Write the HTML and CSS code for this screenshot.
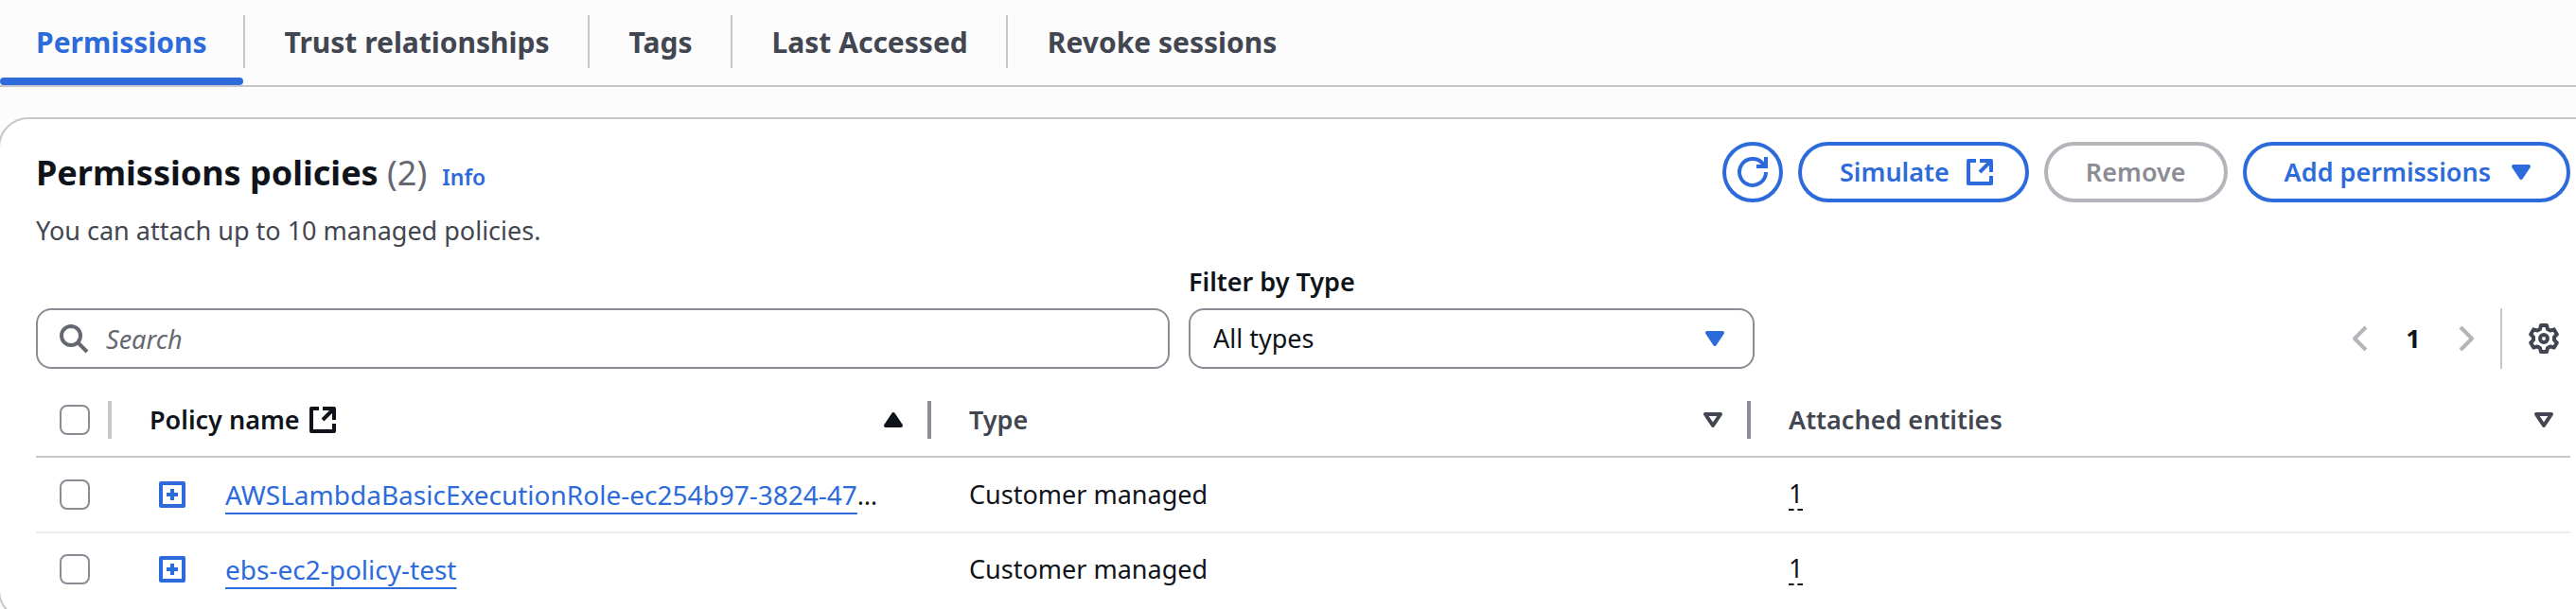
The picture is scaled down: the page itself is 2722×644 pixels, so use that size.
FILE: index.html
```html
<!DOCTYPE html>
<html lang="en">
<head>
<meta charset="utf-8">
<title>Permissions</title>
<link rel="stylesheet" href="styles.css">
</head>
<body>
<svg class="sprite" aria-hidden="true">
  <symbol id="external" viewBox="0 0 16 16"><path d="M6 2H2v12h12v-4M8 2h6v6M14 2 8 8" fill="none" stroke="currentColor" stroke-width="2" stroke-linejoin="round"/></symbol>
  <symbol id="down" viewBox="0 0 16 16"><path d="M4 5h8l-4 6z" fill="currentColor" stroke="currentColor" stroke-width="2" stroke-linejoin="round"/></symbol>
  <symbol id="up" viewBox="0 0 16 16"><path d="M4 11h8L8 5z" fill="currentColor" stroke="currentColor" stroke-width="2" stroke-linejoin="round"/></symbol>
  <symbol id="sort" viewBox="0 0 16 16"><path d="M4 5h8l-4 6z" fill="none" stroke="currentColor" stroke-width="2" stroke-linejoin="round"/></symbol>
  <symbol id="expand" viewBox="0 0 16 16"><path d="M2 2h12v12H2zM8 5v6M5 8h6" fill="none" stroke="currentColor" stroke-width="2" stroke-linejoin="round"/></symbol>
</svg>

<nav class="tabs" aria-label="Role sections">
  <button class="tab tab-active" type="button"><span>Permissions</span></button>
  <button class="tab" type="button"><span>Trust relationships</span></button>
  <button class="tab" type="button"><span>Tags</span></button>
  <button class="tab" type="button"><span>Last Accessed</span></button>
  <button class="tab" type="button"><span>Revoke sessions</span></button>
</nav>

<main class="panel">
  <header class="panel-header">
    <div class="heading">
      <div class="title-row">
        <h2 class="title">Permissions policies <span class="counter">(2)</span></h2>
        <a class="info" href="#info">Info</a>
      </div>
      <p class="description">You can attach up to 10 managed policies.</p>
    </div>
    <div class="actions">
      <button class="btn btn-icon" type="button" aria-label="Refresh">
        <svg class="icon" viewBox="0 0 16 16"><path d="M15 8a7 7 0 1 1-1.600-4.500L15 5M15 0v5h-5" fill="none" stroke="currentColor" stroke-width="2"/></svg>
      </button>
      <button class="btn btn-trailing" type="button">Simulate <svg class="icon"><use href="#external"/></svg></button>
      <button class="btn" type="button" disabled>Remove</button>
      <button class="btn btn-trailing" type="button">Add permissions <svg class="icon"><use href="#down"/></svg></button>
    </div>
  </header>

  <div class="toolbar">
    <div class="field search">
      <svg class="icon" viewBox="0 0 16 16"><circle cx="6.5" cy="6.5" r="5" fill="none" stroke="currentColor" stroke-width="2"/><path d="m10 10 5 5" stroke="currentColor" stroke-width="2"/></svg>
      <input class="search-input" type="text" placeholder="Search" aria-label="Search">
    </div>
    <div class="filter">
      <label class="filter-label" for="type">Filter by Type</label>
      <div class="field">
        <select class="select" id="type"><option>All types</option></select>
        <svg class="icon select-arrow"><use href="#down"/></svg>
      </div>
    </div>
    <div class="pager">
      <button class="pager-btn" type="button" aria-label="Previous page" disabled><svg class="icon" viewBox="0 0 16 16"><path d="M11 2 5 8l6 6" fill="none" stroke="currentColor" stroke-width="2" stroke-linejoin="round"/></svg></button>
      <button class="page" type="button">1</button>
      <button class="pager-btn" type="button" aria-label="Next page" disabled><svg class="icon" viewBox="0 0 16 16"><path d="m5 2 6 6-6 6" fill="none" stroke="currentColor" stroke-width="2" stroke-linejoin="round"/></svg></button>
      <button class="settings" type="button" aria-label="Preferences">
        <svg class="icon" viewBox="0 0 16 16"><path d="M6.500 1h3l.5 2 1.400.8 2-.6 1.500 2.600L13.500 7.200v1.600l1.400 1.400-1.500 2.600-2-.6L10 13l-.5 2h-3L6 13l-1.400-.8-2 .6-1.500-2.600 1.400-1.400V7.200L1.100 5.800l1.500-2.600 2 .6L6 3z" fill="none" stroke="currentColor" stroke-width="2" stroke-linejoin="round"/><circle cx="8" cy="8" r="2" fill="none" stroke="currentColor" stroke-width="2"/></svg>
      </button>
    </div>
  </div>

  <table class="table">
    <colgroup><col class="col-select"><col><col><col></colgroup>
    <thead>
      <tr>
        <th><div class="head head-select"><input class="check" type="checkbox" aria-label="Select all"></div></th>
        <th><div class="head head-name"><span class="head-text head-sorted">Policy name <svg class="icon"><use href="#external"/></svg></span><svg class="icon head-sorted"><use href="#up"/></svg></div></th>
        <th><div class="head"><span class="head-text">Type</span><svg class="icon"><use href="#sort"/></svg></div></th>
        <th><div class="head head-last"><span class="head-text">Attached entities</span><svg class="icon"><use href="#sort"/></svg></div></th>
      </tr>
    </thead>
    <tbody>
      <tr>
        <td><div class="cell cell-select"><input class="check" type="checkbox" aria-label="Select AWSLambdaBasicExecutionRole"></div></td>
        <td><div class="cell cell-name"><button class="expand" type="button" aria-label="Expand"><svg class="icon"><use href="#expand"/></svg></button><span><a class="link" href="#p1">AWSLambdaBasicExecutionRole-ec254b97-3824-47</a>…</span></div></td>
        <td><div class="cell">Customer managed</div></td>
        <td><div class="cell"><span class="count">1</span></div></td>
      </tr>
      <tr>
        <td><div class="cell cell-select"><input class="check" type="checkbox" aria-label="Select ebs-ec2-policy-test"></div></td>
        <td><div class="cell cell-name"><button class="expand" type="button" aria-label="Expand"><svg class="icon"><use href="#expand"/></svg></button><a class="link" href="#p2">ebs-ec2-policy-test</a></div></td>
        <td><div class="cell">Customer managed</div></td>
        <td><div class="cell"><span class="count">1</span></div></td>
      </tr>
    </tbody>
  </table>
</main>
</body>
</html>
```

FILE: styles.css
```css
:root {
  --blue: #2d6bdb;
  --ink: #0f141a;
  --body: #424650;
  --muted: #656871;
  --line: #c6c6cd;
  --edge: #8c8c94;
  --off: #b4b4bb;
}

* { box-sizing: border-box; }

body {
  height: 100vh;
  margin: 0;
  overflow: hidden;
  background: #fcfcfd;
  color: var(--ink);
  font: 27px/40px "Noto Sans", "Open Sans", sans-serif;
}

button, input, select {
  margin: 0;
  padding: 0;
  border: 0;
  background: none;
  color: inherit;
  font: inherit;
}

.sprite { display: none; }
.icon { display: block; flex: none; width: 32px; height: 32px; }

.tabs {
  display: flex;
  height: 92px;
  border-bottom: 2px solid var(--line);
}

.tab {
  position: relative;
  display: flex;
  padding-top: 16px;
  color: var(--body);
  font-size: 30px;
  font-weight: 700;
}

.tab span {
  height: 56px;
  padding: 0 40px 0 42px;
  border-right: 2px solid var(--line);
  line-height: 58px;
}

.tab:first-child span { padding: 0 38px; }
.tab:last-child span { border-right: 0; }
.tab-active { color: var(--blue); }

.tab-active::after {
  content: "";
  position: absolute;
  right: 2px;
  bottom: 0;
  left: 0;
  height: 8px;
  border-radius: 4px;
  background: var(--blue);
}

.panel {
  margin: 32px -34px 0 -2px;
  padding: 24px 38px 14px;
  border: 2px solid var(--line);
  border-radius: 32px;
  background: #fff;
}

.panel-header {
  display: flex;
  justify-content: space-between;
}

.title-row {
  display: flex;
  align-items: baseline;
  gap: 16px;
}

.title {
  margin: 0;
  font-size: 36px;
  font-weight: 700;
  line-height: 66px;
}

.counter { color: var(--muted); font-weight: 400; }
.info { color: var(--blue); font-size: 23px; font-weight: 600; text-decoration: none; }
.description { margin: 8px 0 0; color: var(--body); }

.actions { display: flex; gap: 16px; height: 64px; }

.btn {
  display: flex;
  align-items: center;
  gap: 16px;
  height: 64px;
  padding: 0 40px;
  border: 4px solid currentColor;
  border-radius: 32px;
  color: var(--blue);
  font-weight: 600;
}

.btn:disabled { border-color: var(--off); color: var(--edge); }
.btn-icon { padding: 0 12px; }
.btn-trailing { padding-right: 32px; }

.toolbar {
  display: grid;
  grid-template-columns: 1198fr 598fr 842fr;
  align-items: end;
  gap: 20px;
  margin-top: 14px;
}

.field {
  position: relative;
  display: flex;
  align-items: center;
  height: 64px;
  border: 2px solid var(--edge);
  border-radius: 16px;
}

.search { gap: 18px; padding-left: 22px; color: var(--muted); }
.search-input { flex: 1; height: 60px; outline: 0; }
.search-input::placeholder { color: var(--muted); font-style: italic; opacity: 1; }
.filter-label { display: block; margin-bottom: 8px; font-weight: 600; }
.select { width: 100%; height: 60px; padding-left: 24px; appearance: none; }
.select-arrow { position: absolute; right: 24px; color: var(--blue); pointer-events: none; }

.pager {
  display: flex;
  align-items: center;
  justify-content: flex-end;
  height: 64px;
}

.pager-btn { color: var(--off); }
.page { width: 80px; font-weight: 700; }
.settings { height: 64px; margin-left: 20px; padding: 0 12px 0 28px; border-left: 2px solid var(--line); color: var(--body); }

.table {
  width: 100%;
  margin-top: 34px;
  border-collapse: collapse;
  table-layout: fixed;
}

.col-select { width: 80px; }

th {
  padding: 0 0 18px;
  border-bottom: 2px solid var(--line);
  color: var(--body);
  font-weight: 600;
  text-align: left;
}

td { padding: 0; border-bottom: 2px solid #ebebf0; }
tbody tr:last-child td { border-bottom: 0; }

.head {
  display: flex;
  align-items: center;
  justify-content: space-between;
  height: 40px;
  padding: 0 20px 0 40px;
  border-right: 4px solid var(--edge);
}

.head-select { padding: 0 0 0 25px; border-color: var(--line); }
.head-last { padding-right: 12px; border-right: 0; }
.head-text { display: flex; align-items: center; gap: 8px; }
.head-sorted { color: var(--ink); }

.check {
  display: block;
  width: 32px;
  height: 32px;
  border: 2px solid var(--edge);
  border-radius: 8px;
  background: #fff;
  appearance: none;
}

.cell { display: flex; align-items: center; height: 78px; padding-left: 40px; }
tbody tr:last-child .cell { height: 76px; }
.cell.cell-select { padding-left: 25px; }
.cell.cell-name { gap: 40px; padding-left: 48px; }
.expand { color: var(--blue); }
.link { color: var(--blue); font-size: 28px; text-decoration: underline; text-decoration-thickness: 2px; text-underline-offset: 8px; text-decoration-skip-ink: none; }
.count { line-height: 32px; border-bottom: 2px dashed var(--ink); }
```
